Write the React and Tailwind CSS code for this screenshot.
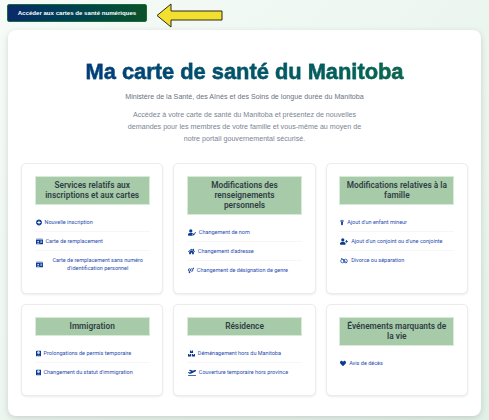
import React from "react";
import { FaPlusCircle, FaIdCard, FaUserEdit, FaHome, FaVenusMars, FaChild, FaUserPlus, FaPassport, FaBoxes, FaPlaneDeparture, FaHeart } from "react-icons/fa";

const Rings = (p) => (
  <svg viewBox="0 0 16 12" fill="none" stroke="currentColor" strokeWidth="1.4" {...p}>
    <circle cx="5" cy="7" r="3.6" />
    <circle cx="11" cy="7" r="3.6" />
    <path d="M2 1l12 10" />
  </svg>
);

const cards = [
  { title: "Services relatifs aux inscriptions et aux cartes", links: [[FaPlusCircle, "Nouvelle inscription", "w-[6px]"], [FaIdCard, "Carte de remplacement", "w-[7px]"], [FaIdCard, "Carte de remplacement sans numéro d'identification personnel", "w-[7px]"]] },
  { title: "Modifications des renseignements personnels", links: [[FaUserEdit, "Changement de nom", "w-[8px]"], [FaHome, "Changement d'adresse", "w-[7px]"], [FaVenusMars, "Changement de désignation de genre", "w-[6px]"]] },
  { title: "Modifications relatives à la famille", links: [[FaChild, "Ajout d'un enfant mineur", "w-[4px]"], [FaUserPlus, "Ajout d'un conjoint ou d'une conjointe", "w-[8px]"], [Rings, "Divorce ou séparation", "w-[8px]"]] },
  { title: "Immigration", links: [[FaPassport, "Prolongations de permis temporaire", "w-[5px]"], [FaPassport, "Changement du statut d'immigration", "w-[5px]"]] },
  { title: "Résidence", links: [[FaBoxes, "Déménagement hors du Manitoba", "w-[7px]"], [FaPlaneDeparture, "Couverture temporaire hors province", "w-[8px]"]] },
  { title: "Événements marquants de la vie", links: [[FaHeart, "Avis de décès", "w-[6px]"]] },
];

function Card({ title, links }) {
  return (
    <div className="rounded-[5px] border border-[#ececec] bg-white px-[12.5px] pt-[12px] pb-[13px] shadow-[0_1px_2px_rgba(0,0,0,0.08)]">
      <h2 className="mb-[8.5px] border border-[#d8ead8] bg-[#a7caa8] px-[6px] py-[3.25px] text-center font-['Roboto',sans-serif] text-[8.3px] leading-[10px] font-semibold text-[#2f3e46]">
        {title}
      </h2>
      <ul>
        {links.map(([Icon, label, w], i) => (
          <li key={i} className="flex min-h-[19px] items-center justify-center border-b border-[#f6f6f6] py-[4.75px] last:border-b-0">
            <a className="flex w-full items-center gap-[3px] pl-[1px] font-['Roboto',sans-serif] text-[5.5px] leading-[8.5px] text-[#1f4bb0]">
              <Icon className={"h-[7px] shrink-0 text-[#0b3a94] " + w} />
              <span className={label.length > 45 ? "flex-1 text-center" : ""}>{label}</span>
            </a>
          </li>
        ))}
      </ul>
    </div>
  );
}

export default function App() {
  return (
    <div className="h-[420px] w-[489px] overflow-hidden bg-gradient-to-br from-[#f6fbf7] to-[#e2f1e8] font-['Liberation_Sans',sans-serif]">
      <div className="flex items-start gap-[9px] pt-[3px] pl-[7px]">
        <a className="mt-[1px] flex h-[18px] w-[140px] items-center justify-center rounded-[2px] border border-[#1b6b3a] bg-gradient-to-r from-[#0a2a6b] to-[#0c5228] text-[6.1px] font-semibold text-white">
          Accéder aux cartes de santé numériques
        </a>
        <svg viewBox="0 0 67 25" className="h-[25px] w-[67px]">
          <path d="M1 12.5 15 1v7h51v9H15v7z" fill="#f2df2f" stroke="#2b2b1a" strokeWidth="1" />
        </svg>
      </div>
      <main className="mx-[8px] mt-[2px] h-[386px] rounded-[8px] bg-white px-[13px] pt-[30px] shadow-[0_2px_6px_rgba(0,0,0,0.15)]">
        <h1 className="mx-auto w-fit bg-gradient-to-r from-[#003a82] to-[#0a6b45] bg-clip-text text-[21.85px] leading-[24px] font-bold text-transparent [-webkit-text-stroke:0.35px_#0a4f6a]">
          Ma carte de santé du Manitoba
        </h1>
        <p className="mt-[8px] text-center text-[7.15px] leading-[10px] text-[#6b7280]">
          Ministère de la Santé, des Aînés et des Soins de longue durée du Manitoba
        </p>
        <p className="mx-auto mt-[7px] w-[240px] text-center text-[7.15px] leading-[12px] text-[#7b8494]">
          Accédez à votre carte de santé du Manitoba et présentez de nouvelles demandes pour les membres de votre famille et vous-même au moyen de notre portail gouvernemental sécurisé.
        </p>
        <div className="mt-[18px] grid grid-cols-3 gap-x-[10px] gap-y-[10px]">
          {cards.map((c) => <Card key={c.title} {...c} />)}
        </div>
      </main>
    </div>
  );
}
